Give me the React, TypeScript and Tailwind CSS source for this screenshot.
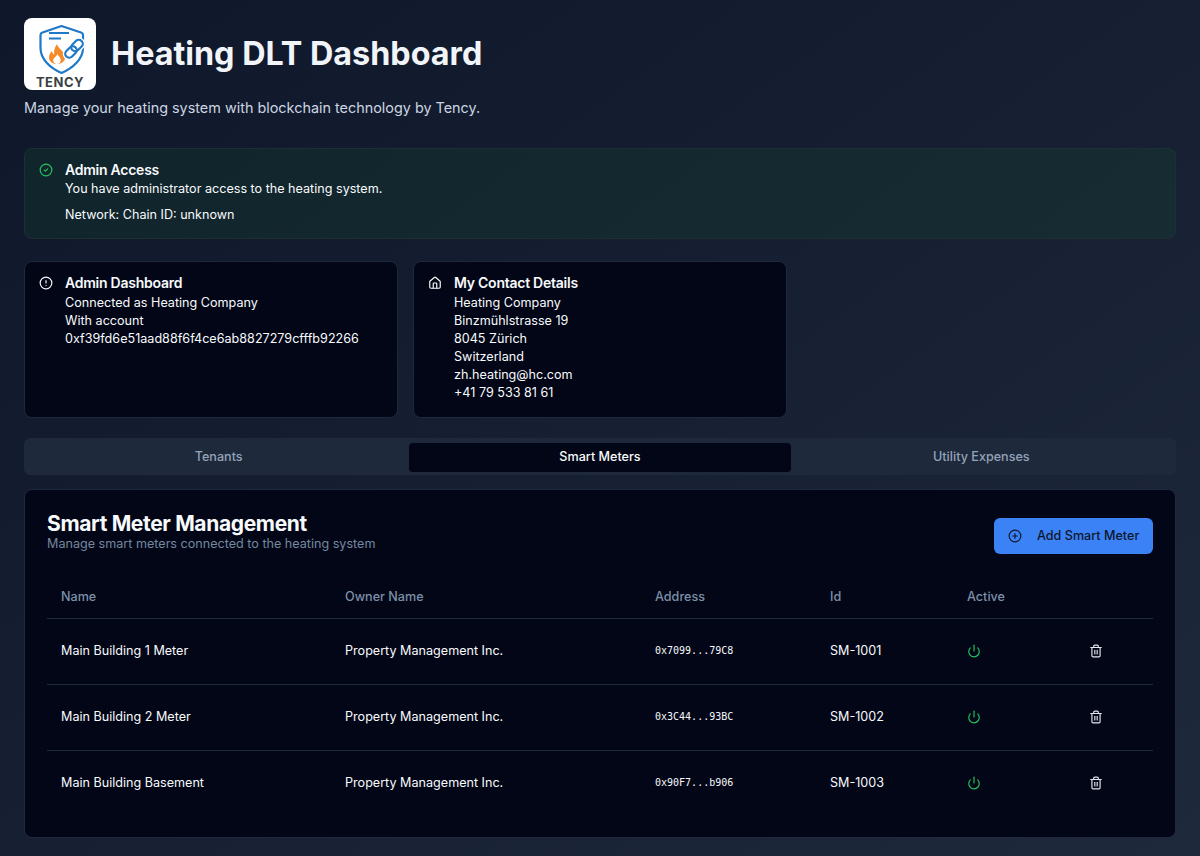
import { CheckCircle2, AlertCircle, Home, CirclePlus, Power, Trash2 } from "lucide-react";

function Logo() {
  return (
    <div className="w-[72px] h-[72px] shrink-0 rounded-lg bg-white flex flex-col items-center">
      <svg width="72" height="58" viewBox="0 0 72 58" fill="none">
        <path d="M37.5 8 L57 14.5 Q59 15.2 59 17 V30 C59 41 49 50 37.5 55 C26 50 16.5 41 16.5 30 V17 Q16.5 15.2 18.5 14.5 Z" stroke="#1f78c8" strokeWidth="2.2" strokeLinejoin="round" fill="white" />
        <path d="M25 15 H45 M25 20.5 H37" stroke="#1f78c8" strokeWidth="2" />
        <path d="M33 26 C34 31 41 33 41 39.5 C41 43.5 37.5 46 33 46 C28.5 46 25 43.5 25 39.5 C25 36.5 26.5 34.5 28 33 C28.3 35 29 36 30.2 36.5 C29.6 33 30.8 29 33 26 Z" fill="#f58a28" />
        <path d="M33.5 36 C34.5 38.5 36.8 39.8 36.8 42 C36.8 44.5 35 46 33 46 C31 46 29.2 44.5 29.2 42.3 C29.2 39.8 32.5 38.8 33.5 36 Z" fill="white" />
        <g stroke="white" strokeWidth="5" fill="white">
          <rect x="49" y="21" width="8" height="13" rx="4" transform="rotate(45 53 27.5)" />
          <rect x="43" y="27.5" width="8" height="13" rx="4" transform="rotate(45 47 34)" />
        </g>
        <g stroke="#1f78c8" strokeWidth="2.2" fill="none">
          <rect x="49" y="21" width="8" height="13" rx="4" transform="rotate(45 53 27.5)" />
          <rect x="43" y="27.5" width="8" height="13" rx="4" transform="rotate(45 47 34)" />
        </g>
      </svg>
      <span className="text-[#3a3f44] text-[13px] leading-3 font-bold tracking-[0.5px]">TENCY</span>
    </div>
  );
}

const meters = [
  ["Main Building 1 Meter", "Property Management Inc.", "0x7099...79C8", "SM-1001"],
  ["Main Building 2 Meter", "Property Management Inc.", "0x3C44...93BC", "SM-1002"],
  ["Main Building Basement", "Property Management Inc.", "0x90F7...b906", "SM-1003"],
];

function InfoCard({ icon, title, lines }: { icon: React.ReactNode; title: string; lines: string[] }) {
  return (
    <div className="w-[374px] h-[157px] rounded-lg border border-[#1e293b] bg-[#020617] pl-[14px] pr-4 pt-3 flex gap-3 text-[#f8fafc]">
      <div className="w-[14px] shrink-0">{icon}</div>
      <div>
        <h3 className="text-[14px] leading-[18px] font-semibold tracking-[-0.25px]">{title}</h3>
        <div className="text-[12.6px] leading-[18px] mt-[2px]">
          {lines.map((l) => (
            <div key={l}>{l}</div>
          ))}
        </div>
      </div>
    </div>
  );
}

export default function App() {
  return (
    <div className="h-[856px] overflow-hidden bg-gradient-to-br from-[#0f172a] to-[#1e293b] px-6 pt-[18px] text-[#f8fafc] font-['Inter',sans-serif]">
      <div className="flex items-center gap-[15px]">
        <Logo />
        <h1 className="text-[32.3px] leading-9 font-bold text-[#f1f5f9]">Heating DLT Dashboard</h1>
      </div>
      <p className="mt-2 text-[14.4px] leading-5 text-[#cbd5e1]">Manage your heating system with blockchain technology by Tency.</p>

      <div className="mt-[30px] h-[91px] rounded-lg border border-[#1c3034] bg-[#14532d]/20 pl-[14px] pr-4 pt-3 flex gap-3">
        <CheckCircle2 className="w-[14px] h-[14px] mt-[2px] text-[#22c55e] shrink-0" />
        <div>
          <h3 className="text-[14px] leading-[18px] font-semibold tracking-[-0.25px]">Admin Access</h3>
          <p className="text-[12.6px] leading-[18px] mt-[1px]">You have administrator access to the heating system.</p>
          <p className="text-[12.6px] leading-[18px] mt-2">Network: Chain ID: unknown</p>
        </div>
      </div>

      <div className="mt-[22px] flex gap-[15px]">
        <InfoCard
          icon={<AlertCircle className="w-[14px] h-[14px] mt-[2px]" />}
          title="Admin Dashboard"
          lines={["Connected as Heating Company", "With account", "0xf39fd6e51aad88f6f4ce6ab8827279cfffb92266"]}
        />
        <InfoCard
          icon={<Home className="w-[14px] h-[14px] mt-[2px]" />}
          title="My Contact Details"
          lines={["Heating Company", "Binzmühlstrasse 19", "8045 Zürich", "Switzerland", "zh.heating@hc.com", "+41 79 533 81 61"]}
        />
      </div>

      <div className="mt-5 h-[37px] rounded-md bg-[#1e293b] px-1 pt-[5px] pb-[3px] grid grid-cols-3 text-[12.6px] font-medium text-[#94a3b8]">
        <div className="flex items-center justify-center">Tenants</div>
        <div className="flex items-center justify-center rounded-[4px] bg-[#020617] text-[#f8fafc]">Smart Meters</div>
        <div className="flex items-center justify-center">Utility Expenses</div>
      </div>

      <div className="mt-[14px] h-[349px] rounded-lg border border-[#1e293b] bg-[#020617] px-[22px] pt-[22px]">
        <div className="flex justify-between items-start">
          <div>
            <h2 className="text-[21px] leading-[24px] font-bold tracking-[-0.35px] text-[#f8fafc]">Smart Meter Management</h2>
            <p className="text-[12.6px] leading-[16px] text-[#74889f]">Manage smart meters connected to the heating system</p>
          </div>
          <button className="mt-[6px] w-[159px] h-9 rounded-md bg-[#3b82f6] text-[#0f172a] text-[12.6px] font-medium flex items-center pl-[14px]">
            <CirclePlus className="w-[14px] h-[14px] mr-[15px]" />
            Add Smart Meter
          </button>
        </div>

        <table className="mt-[15px] w-full table-fixed text-[12.6px]">
          <colgroup>
            <col className="w-[284px]" />
            <col className="w-[310px]" />
            <col className="w-[175px]" />
            <col className="w-[137px]" />
            <col className="w-[123px]" />
            <col />
          </colgroup>
          <thead>
            <tr className="h-[49px] border-b border-[#1e293b] text-left text-[#7d90a9]">
              <th className="pl-[14px] pt-[9px] font-medium">Name</th>
              <th className="pl-[14px] pt-[9px] font-medium">Owner Name</th>
              <th className="pl-[14px] pt-[9px] font-medium">Address</th>
              <th className="pl-[14px] pt-[9px] font-medium">Id</th>
              <th className="pl-[14px] pt-[9px] font-medium">Active</th>
              <th />
            </tr>
          </thead>
          <tbody>
            {meters.map((m, i) => (
              <tr key={m[3]} className={`h-[66px] ${i < 2 ? "border-b border-[#1e293b]" : ""}`}>
                <td className="pl-[14px]">{m[0]}</td>
                <td className="pl-[14px]">{m[1]}</td>
                <td className="pl-[14px] pb-[2px] font-['DejaVu_Sans_Mono',monospace] text-[10px]">{m[2]}</td>
                <td className="pl-[14px]">{m[3]}</td>
                <td className="pl-[14px]">
                  <Power className="w-[14px] h-[14px] text-[#22c55e]" />
                </td>
                <td className="pl-[13px]">
                  <Trash2 className="w-[14px] h-[14px] text-[#e2e8f0]" />
                </td>
              </tr>
            ))}
          </tbody>
        </table>
      </div>
    </div>
  );
}
